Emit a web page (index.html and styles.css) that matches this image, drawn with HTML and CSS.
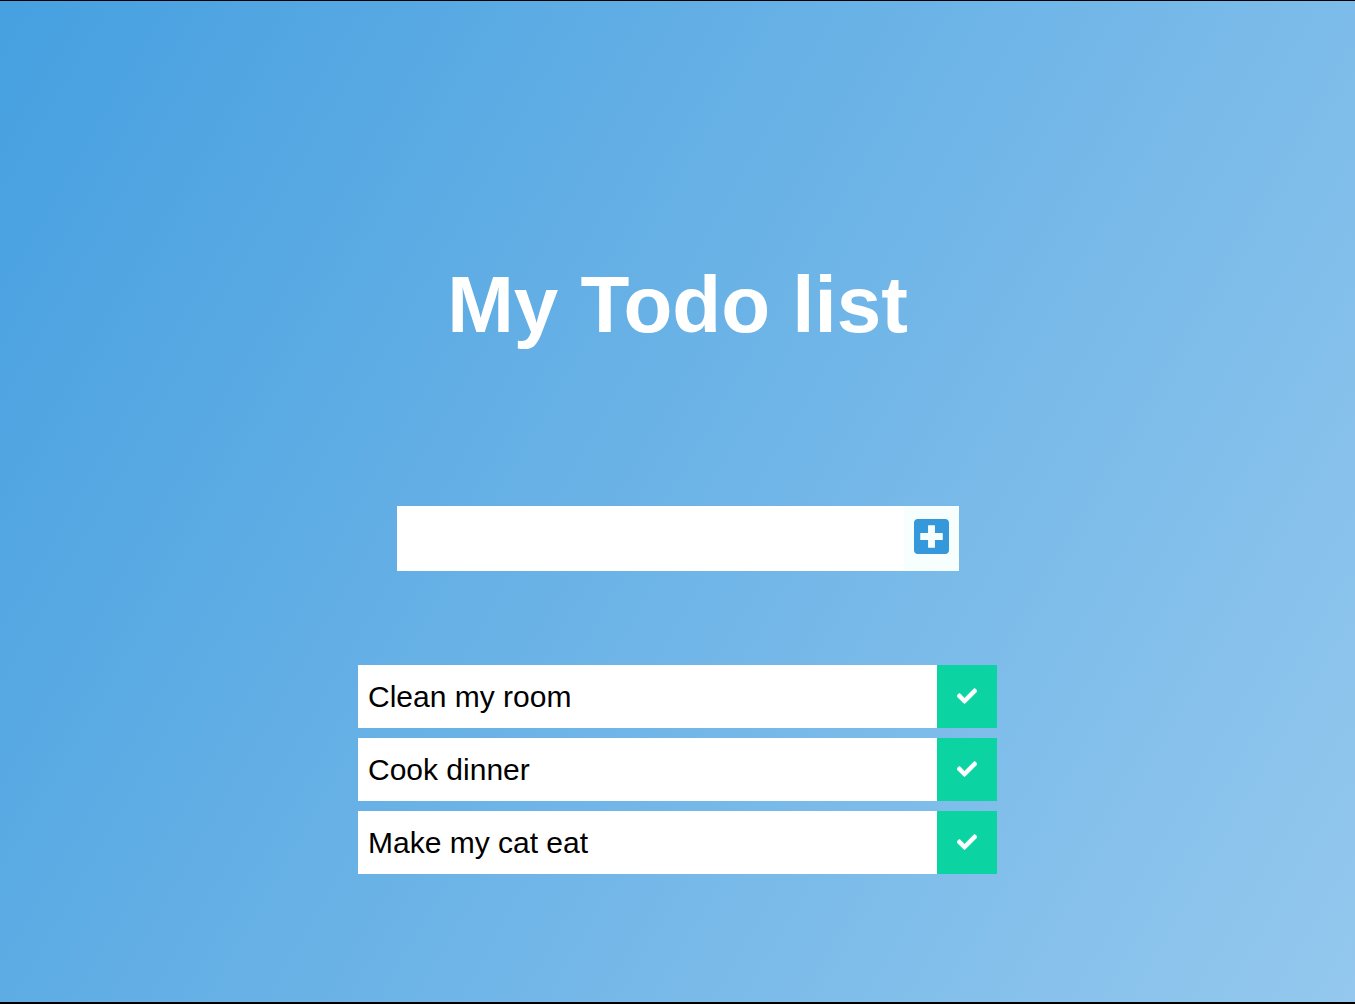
FILE: index.html
```html
<!DOCTYPE html>
<html lang="en">
<head>
  <meta charset="utf-8">
  <meta name="viewport" content="width=device-width, initial-scale=1">
  <title>My Todo list</title>
  <link rel="stylesheet" href="styles.css">
</head>
<body>
  <svg class="sprite" aria-hidden="true">
    <symbol id="check" viewBox="0 0 512 512">
      <path d="M173.898 439.404l-166.4-166.4c-9.997-9.997-9.997-26.206 0-36.204l36.203-36.204c9.997-9.998 26.207-9.998 36.204 0L192 312.690 432.095 72.596c9.997-9.997 26.207-9.997 36.204 0l36.203 36.204c9.997 9.997 9.997 26.206 0 36.204l-294.400 294.401c-9.998 9.997-26.207 9.997-36.204-.001z"/>
    </symbol>
  </svg>
  <header class="header">
    <h1 class="title">My Todo list</h1>
  </header>
  <main class="main">
    <form class="todo-form">
      <input class="todo-input" type="text" aria-label="New todo">
      <button class="add-button" type="button" aria-label="Add todo">
        <svg class="add-icon" viewBox="0 32 448 448" aria-hidden="true">
          <path fill-rule="evenodd" d="M400 32H48C21.500 32 0 53.500 0 80v352c0 26.500 21.500 48 48 48h352c26.500 0 48-21.500 48-48V80c0-26.500-21.500-48-48-48zM184 112h80q4 0 4 4v96h96q4 0 4 4v80q0 4-4 4h-96v96q0 4-4 4h-80q-4 0-4-4v-96H84q-4 0-4-4v-80q0-4 4-4h96v-96q0-4 4-4z"/>
        </svg>
      </button>
    </form>
    <ul class="todo-list">
      <li class="todo">
        <span class="todo-text">Clean my room</span>
        <button class="done-button" type="button" aria-label="Complete Clean my room"><svg class="done-icon" aria-hidden="true"><use href="#check"/></svg></button>
      </li>
      <li class="todo">
        <span class="todo-text">Cook dinner</span>
        <button class="done-button" type="button" aria-label="Complete Cook dinner"><svg class="done-icon" aria-hidden="true"><use href="#check"/></svg></button>
      </li>
      <li class="todo">
        <span class="todo-text">Make my cat eat</span>
        <button class="done-button" type="button" aria-label="Complete Make my cat eat"><svg class="done-icon" aria-hidden="true"><use href="#check"/></svg></button>
      </li>
    </ul>
  </main>
</body>
</html>
```
FILE: styles.css
```css
* {
  box-sizing: border-box;
  margin: 0;
  padding: 0;
}

body {
  min-height: 100vh;
  padding: 0 20px;
  border-top: 1px solid #000;
  border-bottom: 2px solid #000;
  background: linear-gradient(120deg, #46a0e0, #94c8ee) no-repeat;
  font-family: Arial, "Liberation Sans", sans-serif;
}

.sprite {
  display: none;
}

.header {
  padding: 258px 0 155px;
  text-align: center;
}

.title {
  color: #fff;
  font-size: 80px;
  line-height: 92px;
}

.main {
  display: flex;
  flex-direction: column;
  align-items: center;
  gap: 94px;
  padding-bottom: 94px;
}

.todo-form {
  display: flex;
  width: 100%;
  max-width: 562px;
}

.todo-input {
  flex: 1;
  min-width: 0;
  padding: 0 10px;
  border: none;
  background: #fff;
  font: inherit;
  font-size: 30px;
}

.add-button {
  display: flex;
  align-items: center;
  justify-content: center;
  width: 55px;
  height: 65px;
  padding-bottom: 4px;
  border: none;
  background: #f7fffe;
  cursor: pointer;
}

.add-icon {
  width: 35px;
  height: 35px;
  fill: #3498db;
}

.todo-list {
  display: flex;
  flex-direction: column;
  gap: 10px;
  width: 100%;
  max-width: 639px;
  list-style: none;
}

.todo {
  display: flex;
  background: #fff;
  color: #000;
}

.todo-text {
  flex: 1;
  padding: 14px 10px;
  font-size: 30px;
  line-height: 35px;
}

.done-button {
  display: flex;
  align-items: center;
  justify-content: center;
  width: 60px;
  padding-bottom: 2px;
  border: none;
  background: #0bd4a2;
  cursor: pointer;
}

.done-icon {
  width: 20px;
  height: 20px;
  overflow: visible;
  fill: #fff;
  stroke: #fff;
  stroke-width: 16px;
}
```
